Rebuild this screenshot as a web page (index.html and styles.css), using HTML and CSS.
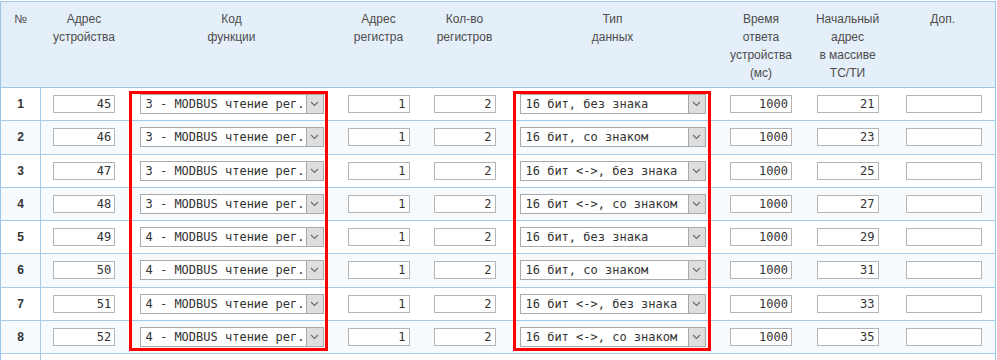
FILE: index.html
```
<!DOCTYPE html>
<html>
<head>
	<meta charset="utf-8">
	<title>Опрос устройств MODBUS</title>
	<link rel="stylesheet" href="styles.css">
</head>
<body>
	<div class="wrap">
		<table class="regs">
			<colgroup>
				<col class="c-num"><col class="c-dev"><col class="c-func"><col class="c-reg">
				<col class="c-cnt"><col class="c-type"><col class="c-time"><col class="c-start"><col class="c-extra">
			</colgroup>
			<thead>
				<tr>
					<th>№</th>
					<th>Адрес<br>устройства</th>
					<th>Код<br>функции</th>
					<th>Адрес<br>регистра</th>
					<th>Кол-во<br>регистров</th>
					<th>Тип<br>данных</th>
					<th>Время<br>ответа<br>устройства<br>(мс)</th>
					<th>Начальный<br>адрес<br>в массиве<br>ТС/ТИ</th>
					<th>Доп.</th>
				</tr>
			</thead>
			<tbody id="rows"></tbody>
		</table>

		<!-- red frames over the two select columns -->
		<div class="mark mark-func"></div>
		<div class="mark mark-type"></div>
	</div>

	<script>
		// rows data: device addr, function, data type, start addr
		var rows = [
			[45, "3 - MODBUS чтение рег.", "16 бит, без знака", 21],
			[46, "3 - MODBUS чтение рег.", "16 бит, со знаком", 23],
			[47, "3 - MODBUS чтение рег.", "16 бит <->, без знака", 25],
			[48, "3 - MODBUS чтение рег.", "16 бит <->, со знаком", 27],
			[49, "4 - MODBUS чтение рег.", "16 бит, без знака", 29],
			[50, "4 - MODBUS чтение рег.", "16 бит, со знаком", 31],
			[51, "4 - MODBUS чтение рег.", "16 бит <->, без знака", 33],
			[52, "4 - MODBUS чтение рег.", "16 бит <->, со знаком", 35]
		];

		var arrow = '<span class="sel-btn"><svg width="9" height="6" viewBox="0 0 9 6"><polyline points="1,1 4.5,4.5 8,1" fill="none" stroke="#6a6a6a" stroke-width="1.1"/></svg></span>';

		function esc(s){
			return s.replace(/&/g, "&amp;").replace(/</g, "&lt;").replace(/>/g, "&gt;");
		}

		function sel(text, cls){
			return '<div class="sel ' + cls + '"><span class="sel-text">' + esc(text) + '</span>' + arrow + '</div>';
		}

		function inp(val, cls){
			return '<input class="num ' + (cls || "") + '" type="text" value="' + val + '">';
		}

		var html = "";
		rows.forEach(function(r, i){
			html += '<tr>' +
				'<td class="n">' + (i + 1) + '</td>' +
				'<td class="first">' + inp(r[0]) + '</td>' +
				'<td>' + sel(r[1], "sel-func") + '</td>' +
				'<td>' + inp(1) + '</td>' +
				'<td>' + inp(2) + '</td>' +
				'<td>' + sel(r[2], "sel-type") + '</td>' +
				'<td>' + inp(1000) + '</td>' +
				'<td>' + inp(r[3]) + '</td>' +
				'<td>' + inp("", "wide") + '</td>' +
				'</tr>';
		});
		// next row is cut by the window edge
		html += '<tr><td class="n"></td><td class="first"></td><td></td><td></td><td></td><td></td><td></td><td></td><td></td></tr>';
		document.getElementById("rows").innerHTML = html;
	</script>
</body>
</html>
```

FILE: styles.css
```
body {
    margin: 0;
    background: #fff;
    font-family: "Liberation Sans", Arial, sans-serif;
    font-size: 12px;
    color: #4a4a4a;
}

.wrap {
    position: relative;
    padding-top: 1px;
}

/* main table */
.regs {
    border-collapse: collapse;
    table-layout: fixed;
    width: 995px;
    border: 1px solid #9cc6e9;
}

.c-num { width: 40px; }
.c-dev { width: 87px; }
.c-func { width: 208px; }
.c-reg { width: 86px; }
.c-cnt { width: 86px; }
.c-type { width: 210px; }
.c-time { width: 87px; }
.c-start { width: 86px; }
.c-extra { width: 105px; }

.regs th {
    background: #e5eff9;
    font-weight: normal;
    line-height: 18px;
    vertical-align: top;
    text-align: center;
    padding: 8px 0 0;
    height: 77px;
    border-bottom: 1px solid #9cc6e9;
    color: #4d4d4d;
}

.regs td {
    height: 32.25px;
    padding: 0;
    text-align: center;
    vertical-align: middle;
    border-bottom: 1px solid #a4cbea;
}

.regs tbody tr:nth-child(even) td {
    background: #f7fafd;
}

.regs td.n {
    font-weight: bold;
    color: #333;
}

.regs td.first {
    border-left: 1px solid #a4cbea;
}

/* fields */
.num {
    box-sizing: border-box;
    width: 62px;
    height: 18px;
    margin: 0;
    padding: 0 3px 0 2px;
    border: 1px solid #b5b5b5;
    background: #fff;
    font-family: "DejaVu Sans Mono", "Liberation Mono", monospace;
    font-size: 12px;
    color: #333;
    text-align: right;
    vertical-align: middle;
}

.num.wide {
    width: 76px;
    margin-left: 2px;
}

.sel {
    box-sizing: border-box;
    display: inline-flex;
    align-items: stretch;
    height: 20px;
    border: 1px solid #aaa;
    background: #fff;
    vertical-align: middle;
    text-align: left;
}

.sel-func { width: 184px; }
.sel-type { width: 186px; }

.sel-text {
    flex: 1;
    overflow: hidden;
    white-space: nowrap;
    padding-left: 5px;
    font-family: "DejaVu Sans Mono", "Liberation Mono", monospace;
    font-size: 12px;
    line-height: 18px;
    color: #333;
}

.sel-btn {
    width: 16px;
    display: flex;
    align-items: center;
    justify-content: center;
    background: #dedede;
    border-left: 1px solid #a8a8a8;
}

/* red frames */
.mark {
    position: absolute;
    top: 91px;
    height: 260px;
    box-sizing: border-box;
    border: 3px solid #f00;
    pointer-events: none;
}

.mark-func {
    left: 129px;
    width: 199px;
}

.mark-type {
    left: 513px;
    width: 198px;
}
```
